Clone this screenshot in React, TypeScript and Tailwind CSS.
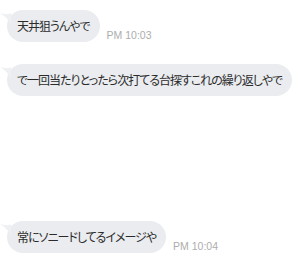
import React from "react";

function Tail() {
  return (
    <svg className="absolute left-[-7px] top-[2px]" width="12" height="14" viewBox="0 0 12 14">
      <path d="M0 1 C4 2 8 3 11 1 L11 13 C9 8 5 4 0 1 Z" fill="#eef0f2" />
    </svg>
  );
}

function Msg({ text, time, mt }: { text: string; time?: string; mt: string }) {
  return (
    <div className={`flex items-end ${mt}`}>
      <div className="relative ml-[7px] h-[32px] flex items-center rounded-[16px] bg-[#eaecef] pl-[10px] pr-[10px] text-[12px] tracking-[-1px] text-[#2b2b2b] whitespace-nowrap [font-family:'Noto_Sans_CJK_JP',sans-serif] [font-feature-settings:'palt']">
        <Tail />
        <span className="relative">{text}</span>
      </div>
      {time && (
        <span className="ml-[7px] mb-[1px] text-[10.5px] leading-[12px] text-[#adadad] [font-family:'Liberation_Sans',sans-serif]">
          {time}
        </span>
      )}
    </div>
  );
}

export default function App() {
  return (
    <div className="w-[295px] h-[253px] bg-white overflow-hidden flex flex-col">
      <Msg text="天井狙うんやで" time="PM 10:03" mt="mt-[10px]" />
      <Msg text="で一回当たりとったら次打てる台探すこれの繰り返しやで" mt="mt-[22px]" />
      <Msg text="常にソニードしてるイメージや" time="PM 10:04" mt="mt-[125px]" />
    </div>
  );
}
